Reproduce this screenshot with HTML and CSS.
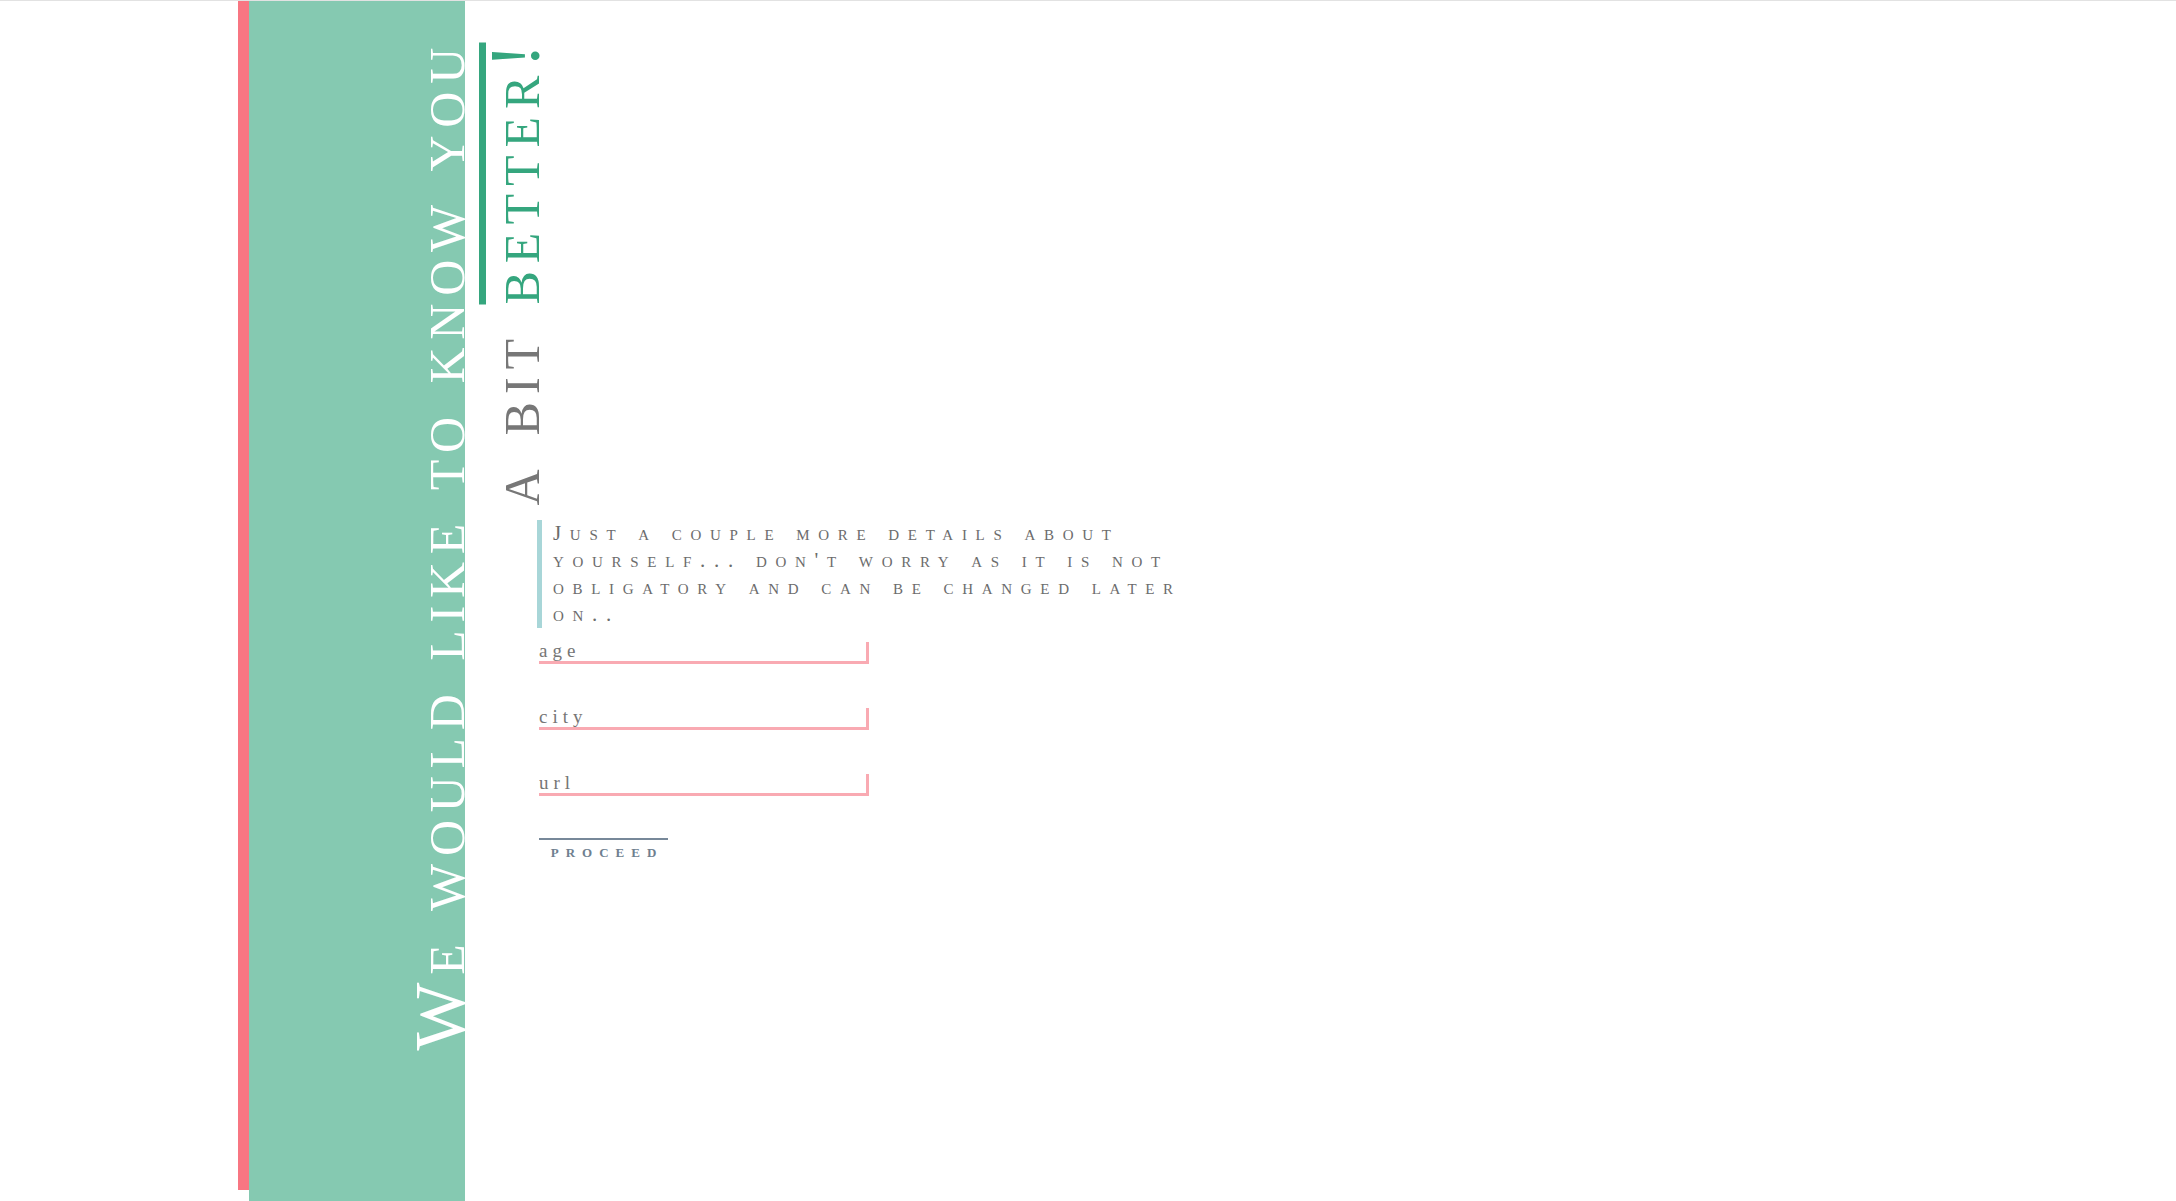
FILE: index.html
```html
<!DOCTYPE html>
<html lang="en">
<head>
<meta charset="utf-8">
<title>We would like to know you a bit better!</title>
<link rel="stylesheet" href="styles.css">
</head>
<body>
<div class="topline"></div>
<main class="page">
  <div class="stripe"></div>
  <aside class="panel">
    <h1 class="title title--main">We would like to know you</h1>
  </aside>
  <section class="content">
    <h2 class="title title--sub">a bit <span class="accent">better!</span></h2>
    <p class="intro">Just a couple more details about yourself... don't worry as it is not obligatory and can be changed later on..</p>
    <form class="form">
      <input class="field" type="text" placeholder="age">
      <input class="field" type="text" placeholder="city">
      <input class="field" type="text" placeholder="url">
      <button class="proceed" type="button">proceed</button>
    </form>
  </section>
</main>
</body>
</html>
```

FILE: styles.css
```css
html, body {
  margin: 0;
  height: 100%;
}

body {
  font-family: "Liberation Serif", serif;
  background: #ffffff;
  overflow: hidden;
}

.topline {
  height: 1px;
  background: #e2e2e2;
}

.page {
  display: flex;
  height: 1200px;
  padding-left: 238px;
}

.stripe {
  flex-shrink: 0;
  width: 11px;
  height: 1189px;
  background: #f87682;
}

.panel {
  flex-shrink: 0;
  width: 216px;
  background: #85c9b1;
  display: flex;
  justify-content: flex-end;
  align-items: flex-start;
}

.title {
  margin: 0;
  writing-mode: vertical-rl;
  transform: rotate(180deg);
  font-size: 72px;
  line-height: 75px;
  font-weight: normal;
  font-variant: small-caps;
  white-space: nowrap;
}

.title--main {
  color: #ffffff;
  letter-spacing: 7.7px;
  margin-right: -13px;
  margin-top: 39px;
}

.content {
  display: flex;
  flex-direction: column;
  align-items: flex-start;
  padding-left: 72px;
}

.title--sub {
  color: #777777;
  letter-spacing: 8px;
  margin-left: -59px;
  margin-top: 35px;
}

.accent {
  color: #35a67e;
  background: linear-gradient(#35a67e, #35a67e) no-repeat right 4px top / 7px calc(100% - 7px);
}

.intro {
  margin: 14px 0 0;
  width: 680px;
  border-left: 5px solid #a8d6d8;
  padding-left: 11px;
  font-size: 21px;
  line-height: 27px;
  letter-spacing: 8.7px;
  font-variant: small-caps;
  color: #6c6c6c;
}

.form {
  display: flex;
  flex-direction: column;
  align-items: flex-start;
  gap: 44px;
  margin-top: 14px;
  margin-left: 2px;
}

.field {
  box-sizing: content-box;
  width: 327px;
  height: 19px;
  margin: 0;
  padding: 0;
  border: 0;
  border-bottom: 3px solid #f9aab2;
  border-right: 3px solid #f9aab2;
  background: transparent;
  outline: none;
  font-family: "Liberation Serif", serif;
  font-size: 19px;
  letter-spacing: 5px;
  color: #757575;
}

.field::placeholder {
  color: #767676;
  opacity: 1;
}

.proceed {
  width: 129px;
  margin-top: -2px;
  padding: 5px 0 0 7px;
  border: 0;
  border-top: 2px solid #778899;
  background: none;
  font-family: "Liberation Serif", serif;
  font-size: 13px;
  line-height: 15px;
  font-weight: bold;
  letter-spacing: 7px;
  text-transform: uppercase;
  text-align: center;
  color: #6f7f90;
  cursor: pointer;
}
```
